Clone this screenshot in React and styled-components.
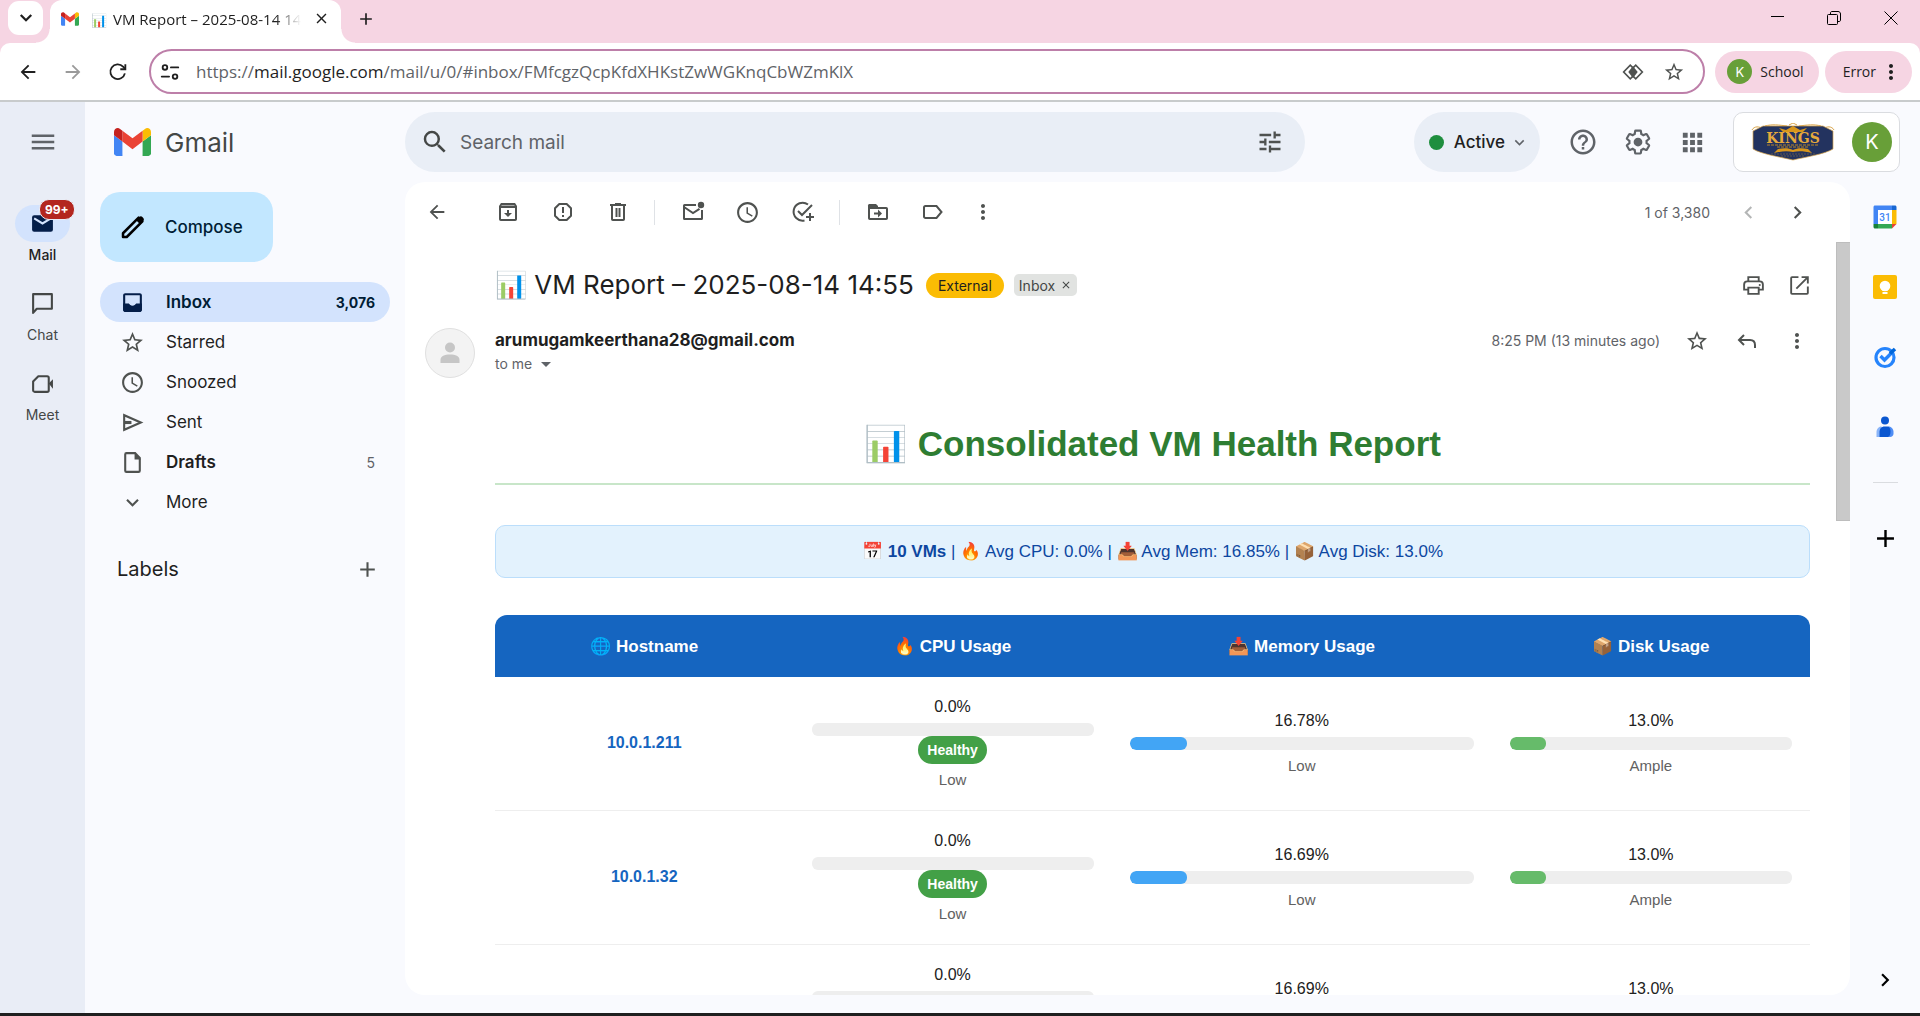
import React from "react";
import styled, { createGlobalStyle } from "styled-components";
import {
  MdAdd, MdApps, MdArrowBack, MdArrowForward, MdChevronLeft, MdChevronRight, MdClose, MdExpandMore,
  MdHelpOutline, MdMenu, MdMoreVert, MdSchedule, MdSearch, MdStarBorder, MdTune, MdArrowDropDown,
} from "react-icons/md";

const ui = `Inter, "Open Sans", sans-serif`;
const chrome = `"Open Sans", "Noto Sans", sans-serif`;
const arial = `"Liberation Sans", Arial, sans-serif`;

const GlobalStyle = createGlobalStyle`
  *, *::before, *::after { box-sizing: border-box; }
  body { margin: 0; background: #f9fafe; font-family: ${ui}; color: #1f1f1f; }
  button, input { font: inherit; color: inherit; }
  button { border: 0; padding: 0; background: none; cursor: pointer; }
  a { color: inherit; text-decoration: none; }
  svg { display: block; flex: none; }
`;

/* ---------- shared parts ---------- */
const Page = styled.div`
  display: flex;
  flex-direction: column;
  height: 100vh;
  border-bottom: 3px solid #1f1f1f;
  overflow: hidden;
`;
const Grow = styled.div`flex: 1;`;
const IconButton = styled.button`
  display: grid;
  place-items: center;
  flex: none;
  width: ${(p) => p.$w || 55}px;
  height: ${(p) => p.$h || 40}px;
  color: ${(p) => p.$color || "#4f5250"};
`;
const Avatar = styled.span`
  display: grid;
  place-items: center;
  flex: none;
  width: ${(p) => p.$size}px;
  height: ${(p) => p.$size}px;
  border-radius: 50%;
  background: #689f38;
  color: #fff;
  font-family: ${ui};
  font-size: ${(p) => p.$font}px;
`;

/* ---------- browser chrome ---------- */
const TabStrip = styled.div`
  display: flex;
  flex: none;
  height: 43px;
  padding-left: 8px;
  background: #f6d5e3;
`;
const TabMenu = styled.button`
  display: grid;
  place-items: center;
  width: 35px;
  height: 34px;
  margin: 1px 7px 0 0;
  border-radius: 11px;
  background: #fff;
`;
const Tab = styled.div`
  position: relative;
  display: flex;
  align-items: center;
  width: 291px;
  padding: 0 10px 6px 11px;
  border-radius: 12px 12px 0 0;
  background: #fff;
  font-family: ${chrome};
  font-size: 15px;
  &::before, &::after {
    content: "";
    position: absolute;
    bottom: 0;
    width: 14px;
    height: 14px;
  }
  &::before { left: -14px; background: radial-gradient(circle at 0 0, transparent 13px, #fff 14px); }
  &::after { right: -14px; background: radial-gradient(circle at 100% 0, transparent 13px, #fff 14px); }
`;
const TabTitle = styled.span`
  flex: 1;
  margin: 0 10px 0 12px;
  overflow: hidden;
  white-space: nowrap;
  mask-image: linear-gradient(to right, #000 88%, transparent);
`;
const TabEmoji = styled.span`font-size: 13px; margin-right: 6px;`;
const NewTab = styled(IconButton)`margin-left: 5px;`;
const ToolbarWrap = styled.div`flex: none; background: #f6d5e3;`;
const Toolbar = styled.div`
  display: flex;
  align-items: center;
  height: 59px;
  padding: 0 8px 0 5px;
  border-bottom: 2px solid #c8cbcc;
  border-radius: 10px 10px 0 0;
  background: #fff;
  font-family: ${chrome};
`;
const Omnibox = styled.div`
  display: flex;
  align-items: center;
  flex: 1;
  min-width: 0;
  height: 45px;
  margin: 0 10px 0 8px;
  padding: 0 8px;
  border: 2px solid #bd7fa9;
  border-radius: 23px;
`;
const Url = styled.div`
  flex: 1;
  min-width: 0;
  margin-left: 15px;
  overflow: hidden;
  white-space: nowrap;
  font-size: 17px;
  line-height: 24px;
  color: #5f6368;
  b { color: #1f1f1f; font-weight: 400; }
`;
const Pill = styled.button`
  display: flex;
  align-items: center;
  gap: ${(p) => p.$gap}px;
  height: 42px;
  padding: ${(p) => p.$pad};
  margin-right: ${(p) => p.$after || 0}px;
  border-radius: 21px;
  background: #f6d5e3;
  font-size: 14px;
`;

/* ---------- application frame ---------- */
const Frame = styled.div`display: flex; flex: 1; min-height: 0;`;
const Rail = styled.nav`
  display: flex;
  flex-direction: column;
  align-items: center;
  flex: none;
  width: 85px;
  background: #e9edf6;
`;
const RailMenu = styled(IconButton)`margin-bottom: 23px;`;
const RailItem = styled.a`
  display: flex;
  flex-direction: column;
  align-items: center;
  gap: 3px;
  height: 80px;
  font-size: 14px;
  line-height: 20px;
  font-weight: ${(p) => (p.$active ? 500 : 400)};
  color: ${(p) => (p.$active ? "#1f1f1f" : "#444746")};
`;
const RailIcon = styled.span`
  position: relative;
  display: grid;
  place-items: center;
  width: 55px;
  height: 37px;
  border-radius: 19px;
  background: ${(p) => (p.$active ? "#d3e3fd" : "transparent")};
`;
const RailBadge = styled.span`
  position: absolute;
  top: -6px;
  left: 24px;
  padding: 0 5px;
  border: 1px solid #e9edf6;
  border-radius: 10px;
  background: #b3261e;
  color: #fff;
  font-size: 12px;
  line-height: 19px;
  font-weight: 700;
`;
const Main = styled.div`display: flex; flex-direction: column; flex: 1; min-width: 0;`;
const Header = styled.header`
  display: flex;
  align-items: center;
  flex: none;
  height: 80px;
  padding-right: 20px;
`;
const Brand = styled.a`
  display: flex;
  align-items: center;
  gap: 14px;
  flex: none;
  width: 320px;
  padding-left: 29px;
  font-size: 26px;
  color: #444746;
`;
const Search = styled.label`
  display: flex;
  align-items: center;
  flex: 0 1 900px;
  height: 60px;
  padding: 0 8px 0 15px;
  border-radius: 30px;
  background: #e9eef6;
  color: #444746;
  input {
    flex: 1;
    min-width: 0;
    margin-left: 8px;
    border: 0;
    outline: 0;
    background: none;
    font-size: 19px;
  }
  input::placeholder { color: #5f6368; opacity: 1; }
`;
const Status = styled.button`
  display: flex;
  align-items: center;
  gap: 5px;
  height: 60px;
  margin-right: 15px;
  padding: 0 11px 0 15px;
  border-radius: 30px;
  background: #e9eef6;
  font-size: 17px;
  font-weight: 500;
`;
const Dot = styled.span`width: 15px; height: 15px; margin-right: 5px; border-radius: 50%; background: #1e8e3e;`;
const Account = styled.button`
  display: flex;
  align-items: center;
  gap: 17px;
  height: 60px;
  margin-left: 13px;
  padding: 0 7px 0 17px;
  border: 1px solid #dadce0;
  border-radius: 10px;
  background: #fff;
`;
const Columns = styled.div`display: flex; flex: 1; min-height: 0; padding-bottom: 18px;`;

/* ---------- left sidebar ---------- */
const Sidebar = styled.aside`flex: none; width: 320px; padding: 10px 15px 0;`;
const Compose = styled.button`
  display: flex;
  align-items: center;
  gap: 17px;
  width: 173px;
  height: 70px;
  margin-bottom: 20px;
  padding-left: 18px;
  border-radius: 20px;
  background: #c2e7ff;
  color: #001d35;
  font-size: 17px;
  font-weight: 500;
`;
const NavItem = styled.a`
  display: flex;
  align-items: center;
  gap: 21px;
  height: 40px;
  padding: 0 15px 0 20px;
  border-radius: 20px;
  background: ${(p) => (p.$active ? "#d3e3fd" : "transparent")};
  color: ${(p) => (p.$active ? "#001d35" : "#1f1f1f")};
  font-size: 17px;
  font-weight: ${(p) => (p.$bold ? 600 : 400)};
  svg { color: ${(p) => (p.$active ? "#041e49" : "#4f5250")}; }
`;
const Count = styled.span`
  margin-left: auto;
  font-size: 14px;
  color: ${(p) => (p.$muted ? "#5f6368" : "inherit")};
  font-weight: ${(p) => (p.$muted ? 400 : 700)};
`;
const LabelsHead = styled.div`
  display: flex;
  align-items: center;
  justify-content: space-between;
  margin: 27px 8px 0 17px;
  font-size: 20px;
`;

/* ---------- message panel ---------- */
const Panel = styled.main`
  display: flex;
  flex-direction: column;
  flex: 1;
  min-width: 0;
  border-radius: 20px;
  background: #fff;
  overflow: hidden;
`;
const Actions = styled.div`
  display: flex;
  align-items: center;
  flex: none;
  height: 60px;
  padding: 0 28px 0 10px;
  font-size: 14px;
  color: #5f6368;
`;
const BackButton = styled(IconButton)`margin-right: 21px;`;
const Divider = styled.span`width: 1px; height: 25px; margin: 0 10px 0 9px; background: #dfe2e6;`;
const PageCount = styled.span`margin-right: 14px;`;
const Scroller = styled.div`display: flex; flex: 1; min-height: 0;`;
const Content = styled.div`
  display: grid;
  grid-template-columns: 50px minmax(0, 1fr);
  column-gap: 20px;
  align-content: start;
  flex: 1;
  min-width: 0;
  padding: 0 26px 0 20px;
  overflow-y: auto;
  scrollbar-width: none;
`;
const Track = styled.div`width: 14px;`;
const Thumb = styled.div`height: 279px; background: #c9c9c9; border: 1px solid #bdbdbd; border-right: 0;`;
const Subject = styled.div`
  grid-column: 2;
  display: flex;
  align-items: center;
  height: 86px;
  margin-right: -12px;
`;
const SubjectText = styled.h2`margin: 0 12px 0 0; font-size: 26px; line-height: 36px; font-weight: 400;`;
const External = styled.span`
  margin-right: 10px;
  padding: 0 12px;
  border-radius: 13px;
  background: #fbbc04;
  font-size: 14px;
  line-height: 25px;
`;
const InboxChip = styled.button`
  display: flex;
  align-items: center;
  gap: 5px;
  height: 22px;
  padding: 0 5px;
  border-radius: 5px;
  background: #e1e3e1;
  color: #444746;
  font-size: 14px;
`;
const Person = styled.span`
  display: grid;
  place-items: center;
  width: 50px;
  height: 50px;
  border: 1px solid #e0e0e0;
  border-radius: 50%;
  background: #f3f3f3;
  color: #c6c6c6;
`;
const Sender = styled.div`display: flex; height: 50px; margin-right: -12px; font-size: 14px; color: #5f6368;`;
const SenderName = styled.div`
  color: #1f1f1f;
  font-size: 17px;
  line-height: 24px;
  font-weight: 700;
`;
const Recipient = styled.button`display: flex; align-items: center; gap: 2px; line-height: 24px;`;
const SenderTools = styled.div`display: flex; align-items: center; height: 25px;`;
const Time = styled.span`margin-right: 12px;`;
const Body = styled.article`grid-column: 2; padding-top: 45px; font-family: ${arial};`;
const ReportTitle = styled.h1`
  margin: 0 0 40px;
  padding-bottom: 18px;
  border-bottom: 2px solid #c8e6c9;
  color: #2e7d32;
  font-size: 35px;
  line-height: 42px;
  text-align: center;
`;
const Summary = styled.p`
  margin: 0 0 37px;
  padding: 13px;
  border: 1px solid #bbdefb;
  border-radius: 10px;
  background: #e3f2fd;
  color: #0d47a1;
  font-size: 17px;
  line-height: 25px;
  text-align: center;
`;
const Table = styled.table`
  width: 100%;
  table-layout: fixed;
  border-spacing: 0;
  border-radius: 12px 12px 0 0;
  overflow: hidden;
  text-align: center;
  color: #212121;
  font-size: 16px;
`;
const Col = styled.col`width: ${(p) => p.$w}%;`;
const Th = styled.th`height: 62px; padding: 0; background: #1565c0; color: #fff; font-size: 17px;`;
const Td = styled.td`padding: 19px 18px 20px; border-bottom: 1px solid #eee;`;
const Host = styled.a`color: #1565c0; font-weight: 700;`;
const Percent = styled.div`line-height: 22px; margin-bottom: 5px;`;
const Meter = styled.div`height: 13px; border-radius: 6px; background: #eee; overflow: hidden;`;
const Fill = styled.div`height: 100%; border-radius: 6px; background: ${(p) => p.$color};`;
const Badge = styled.span`
  display: block;
  width: fit-content;
  margin: 0 auto;
  padding: 0 9px;
  border-radius: 14px;
  background: #43a047;
  color: #fff;
  font-size: 14px;
  line-height: 28px;
  font-weight: 700;
`;
const Level = styled.div`margin-top: 5px; line-height: 21px; font-size: 15px; color: #616161;`;

/* ---------- right add-on rail ---------- */
const Addons = styled.aside`
  display: flex;
  flex-direction: column;
  align-items: center;
  flex: none;
  width: 70px;
`;
const Rule = styled.span`width: 25px; height: 1px; margin: 20px 0; background: #dadce0;`;

/* ---------- drawings ---------- */
const Stroke = ({ size = 24, w = 2, children }) => (
  <svg width={size} height={size} viewBox="0 0 24 24" fill="none" stroke="currentColor" strokeWidth={w}>{children}</svg>
);
const GmailMark = ({ width, height }) => (
  <svg width={width} height={height} viewBox="52 42 88 66">
    <path fill="#4285f4" d="M58 108h14V74L52 59v43c0 3.32 2.69 6 6 6" />
    <path fill="#34a853" d="M120 108h14c3.32 0 6-2.69 6-6V59l-20 15" />
    <path fill="#fbbc04" d="M120 48v26l20-15v-8c0-7.42-8.47-11.65-14.4-7.2" />
    <path fill="#ea4335" d="M72 74V48l24 18 24-18v26L96 92" />
    <path fill="#c5221f" d="M52 51v8l20 15V48l-5.6-4.2c-5.94-4.45-14.4-.22-14.4 7.2" />
  </svg>
);
const ArchiveIcon = () => (
  <Stroke><path d="M4 7v12.2c0 .5.3.8.8.8h14.4c.5 0 .8-.3.8-.8V7" /><path d="M5 3h14l2 3v2H3V6z" fill="currentColor" stroke="none" /><path d="M5.5 5.5h13" stroke="#aaa" strokeWidth="1" /><path d="M12 10v4" /><path d="M8 13h8l-4 4z" fill="currentColor" stroke="none" /></Stroke>
);
const SpamIcon = () => (
  <Stroke><path d="M8.3 4h7.4L20 8.3v7.4L15.7 20H8.3L4 15.700V8.300z" strokeLinejoin="round" /><path d="M12 7v6M12 15v2" /></Stroke>
);
const TrashIcon = () => (
  <Stroke><path d="M4 5h16M9 4h6" /><path d="M6 6v13.200c0 .5.3.8.8.8h10.400c.5 0 .8-.3.8-.8V6" /><path d="M10.500 8v9M13.500 8v9" /></Stroke>
);
const UnreadIcon = () => (
  <Stroke><path d="M15 5H3.500c-.3 0-.5.2-.5.5v13c0 .3.2.5.5.5h17c.3 0 .5-.2.5-.5V10" /><path d="M3 7l9 6 6.500-4.200" /><circle cx="20" cy="5" r="3.200" fill="currentColor" stroke="none" /></Stroke>
);
const TaskIcon = () => (
  <Stroke><path d="M17 4.500A9 9 0 1 0 13.500 20.500" /><path d="M7 11l4 4L21 5" /><path d="M19 13v8M15 17h8" /></Stroke>
);
const MoveIcon = () => (
  <Stroke><path d="M3 7v11.200c0 .5.3.8.8.8h16.400c.5 0 .8-.3.8-.8V8.800c0-.5-.3-.8-.8-.8H3" /><path d="M2 8V5.500C2 4.700 2.700 4 3.500 4H10l2 2v2z" fill="currentColor" stroke="none" /><path d="M8 13.500h5" /><path d="M12 9.500v8l4-4z" fill="currentColor" stroke="none" /></Stroke>
);
const LabelIcon = () => (
  <Stroke><path d="M4.500 6h11L20.500 12l-5 6h-11c-.8 0-1.500-.7-1.500-1.500v-9C3 6.700 3.700 6 4.500 6z" /></Stroke>
);
const PrintIcon = () => (
  <Stroke size={25} w={1.800}><path d="M7 8V4h10v4M7 16H3v-5c0-1.700 1.300-3 3-3h12c1.700 0 3 1.300 3 3v5h-4M7 14h10v6H7z" /><circle cx="18" cy="11.500" r="1" fill="currentColor" stroke="none" /></Stroke>
);
const OpenIcon = () => (
  <Stroke size={25} w={1.800}><path d="M11 4H4.800c-.5 0-.8.3-.8.8v14.400c0 .5.3.8.8.8h14.400c.5 0 .8-.3.8-.8V13M14 4h6v6M20 4L9 15" /></Stroke>
);
const ReplyIcon = () => <Stroke><path d="M9 6L4 11l5 5M4 11h11c3 0 5 2 5 5v3" /></Stroke>;
const InboxIcon = () => (
  <svg width="25" height="25" viewBox="0 0 24 24"><path fill="currentColor" fillRule="evenodd" d="M5 3h14c1.100 0 2 .9 2 2v14c0 1.100-.9 2-2 2H5c-1.100 0-2-.9-2-2V5c0-1.100.9-2 2-2zm0 2v9h4c.6 1.200 1.700 2 3 2s2.400-.8 3-2h4V5z" clipRule="evenodd" /><path fill="currentColor" d="M3 13h5.500c.5 1.200 1.900 2 3.500 2s3-.8 3.500-2H21v6c0 1.100-.9 2-2 2H5c-1.100 0-2-.9-2-2z" /></svg>
);
const GearIcon = () => (
  <svg width="30" height="30" viewBox="0 0 24 24" fill="none">
    <path stroke="currentColor" strokeWidth="1.900" transform="translate(1 1) scale(.917)" d="M19.430 12.980c.04-.32.07-.64.07-.98 0-.34-.03-.66-.07-.98l2.110-1.650c.19-.15.24-.42.12-.64l-2-3.460c-.09-.16-.26-.25-.44-.25-.06 0-.12.01-.17.03l-2.490 1c-.52-.4-1.080-.73-1.690-.98l-.38-2.650C14.460 2.180 14.250 2 14 2h-4c-.25 0-.46.18-.49.42l-.38 2.650c-.61.25-1.170.59-1.690.98l-2.490-1c-.06-.02-.12-.03-.18-.03-.17 0-.34.09-.43.25l-2 3.460c-.13.22-.07.49.12.64l2.110 1.650c-.04.32-.07.65-.07.98 0 .33.03.66.07.98l-2.110 1.650c-.19.15-.24.42-.12.64l2 3.460c.09.16.26.25.44.25.06 0 .12-.01.17-.03l2.490-1c.52.4 1.080.73 1.690.98l.38 2.650c.03.24.24.42.49.42h4c.25 0 .46-.18.49-.42l.38-2.650c.61-.25 1.170-.59 1.690-.98l2.490 1c.06.02.12.03.18.03.17 0 .34-.09.43-.25l2-3.460c.12-.22.07-.49-.12-.64l-2.110-1.650z" />
    <circle cx="12" cy="12" r="3.500" fill="currentColor" />
  </svg>
);
const MailIcon = () => (
  <svg width="25" height="25" viewBox="0 0 24 24"><rect x="2" y="4" width="20" height="16" rx="2" fill="#041e49" /><path d="M4 7l8 5 8-5" fill="none" stroke="#d3e3fd" strokeWidth="2" /></svg>
);
const ChatIcon = () => <Stroke size={25}><path d="M3 21V3h18v14H6.500z" strokeLinejoin="round" /></Stroke>;
const MeetIcon = () => (
  <Stroke size={25}><path d="M8 5h8.500c.8 0 1.500.7 1.500 1.500v12c0 .8-.7 1.500-1.500 1.500h-12c-.8 0-1.500-.7-1.500-1.500V10z" strokeLinejoin="round" /><path d="M18 12l4-4v9z" fill="currentColor" stroke="none" /></Stroke>
);
const SentIcon = () => (
  <Stroke size={25}><path d="M4 5v14l16-7z" /><path d="M4 12h7" strokeWidth="3" /></Stroke>
);
const DraftIcon = () => (
  <Stroke size={25}><path d="M14.500 3H6.200c-.7 0-1.200.5-1.200 1.200v15.600c0 .7.5 1.200 1.200 1.200h11.600c.7 0 1.200-.5 1.200-1.200V7.500z" /><path d="M14 2v7h6z" fill="currentColor" stroke="none" /></Stroke>
);
const PencilIcon = () => (
  <svg width="30" height="30" viewBox="0 0 24 24"><path fill="none" stroke="#000" strokeWidth="2" strokeLinejoin="round" d="M4 20v-3L16.500 4.500l3 3L7 20z" /><path d="M14.500 6.500L17 4c.8-.8 1.800-.8 2.500 0l.7.700c.7.700.7 1.700 0 2.500l-2.500 2.500z" /></svg>
);
const SiteIcon = () => (
  <Stroke size={22}><circle cx="6.500" cy="7" r="2.500" /><path d="M13 7h8M3 17h8" strokeLinecap="round" /><circle cx="17.500" cy="17" r="2.500" /></Stroke>
);
const LensIcon = () => (
  <Stroke size={22} w={1.800}><path d="M12 7.500L9 4.500 1.800 12 9 19.500l3-3M12 7.500l3-3 7.200 7.500-7.200 7.500-3-3" /><path d="M12 7l4 5-4 5-4-5z" fill="currentColor" /></Stroke>
);
const ReloadIcon = () => (
  <Stroke size={22}><path d="M19.500 13.500A8 8 0 1 1 17.500 6.200L20 8.800" /><path d="M20 3.500V9h-5.500" /></Stroke>
);
const KingsLogo = () => (
  <svg width="84" height="38" viewBox="0 0 84 38" role="img" aria-label="Kings crest">
    <path d="M1 7c2-4 8-4 10-1M83 7c-2-4-8-4-10-1M14 3c7-2 14-1 22 0M70 3c-7-2-14-1-22 0M38 2l4-2 4 2" fill="none" stroke="#d9a54a" strokeWidth="1" />
    <path d="M12 3h60l10 5v18c-8 5-27 8-40 11C29 34 10 31 2 26V8z" fill="#23335f" stroke="#d9a54a" strokeWidth=".7" />
    <path d="M32 9l-4-4 7 2 7-4 7 4 7-2-4 4z" fill="#d8961c" />
    <text x="42" y="20" textAnchor="middle" fontFamily="DejaVu Serif, serif" fontWeight="700" fontSize="14" fill="#e6aa3c">KINGS</text>
    <path d="M16 22h52M26 24h32" stroke="#b98528" strokeWidth="1" strokeDasharray="3 1" />
    <path d="M23 30l4-4c6-1 11-1 15 1 4-2 9-2 15-1l4 4c-8-2-14-2-19-1-5-1-11-1-19 1z" fill="#d8961c" />
    <path d="M20 31h44M30 33h24" stroke="#8d7442" strokeWidth=".6" strokeDasharray="2 1" />
  </svg>
);
const CalendarIcon = () => (
  <svg width="24" height="24" viewBox="0 0 24 24">
    <path fill="#fff" d="M4 4h15v15H4z" /><path fill="#4285f4" d="M2 .5h17v4.500H5v14H.5V2C.5 1.200 1.200.5 2 .5z" /><path fill="#1967d2" d="M19 .5h3c.8 0 1.500.7 1.500 1.500v3H19z" />
    <path fill="#fbbc04" d="M19 5h4.500v14H19z" /><path fill="#34a853" d="M5 19h14v4.500H5z" /><path fill="#188038" d="M.5 19H5v4.500H2c-.8 0-1.500-.7-1.500-1.500z" /><path fill="#ea4335" d="M19 19h4.500L19 23.500z" />
    <text x="12" y="16" textAnchor="middle" fontFamily="Roboto, sans-serif" fontSize="10" fontWeight="500" fill="#4285f4">31</text>
  </svg>
);
const KeepIcon = () => (
  <svg width="24" height="24" viewBox="0 0 24 24"><rect width="24" height="24" rx="2" fill="#fbbc04" /><circle cx="12" cy="11" r="5.300" fill="#fff" /><path fill="#fff" d="M9.500 14h5v2h-5zM9.500 17h5v2h-5z" /></svg>
);
const TasksIcon = () => (
  <svg width="24" height="24" viewBox="0 0 24 24" fill="none"><circle cx="12" cy="12.500" r="9" stroke="#2684fc" strokeWidth="3.200" /><path stroke="#2684fc" strokeWidth="3.400" d="M7.500 11l4 4L19 7.500" /><path stroke="#0066da" strokeWidth="3.600" d="M17 8.500l5-4.500" /></svg>
);
const ContactsIcon = () => (
  <svg width="24" height="24" viewBox="0 0 24 24"><circle cx="12" cy="5.500" r="4" fill="#0b57d0" /><path fill="#8ab4f8" d="M3.500 22v-5c0-3 2-5.500 5-5.500V22z" /><path fill="#4f8df5" d="M15 11.500c3 0 5.500 2 5.500 5.500v1.500c0 2-1.500 3.500-3.500 3.500h-2z" /><path fill="#0b57d0" d="M6.500 22v-4.500c0-4 2-6 5-6h2c3 0 4 2 4 5S16.500 22 14 22z" /></svg>
);
const PersonIcon = () => (
  <svg width="20" height="22" viewBox="0 0 20 22" fill="currentColor"><circle cx="10" cy="5.500" r="5" /><path d="M.5 21v-3c0-4 4-5.500 9.500-5.500s9.500 1.500 9.500 5.500v3z" /></svg>
);

/* ---------- data ---------- */
const folders = [
  { name: "Inbox", icon: <InboxIcon />, count: "3,076", active: true, bold: true },
  { name: "Starred", icon: <MdStarBorder size={25} /> },
  { name: "Snoozed", icon: <MdSchedule size={25} /> },
  { name: "Sent", icon: <SentIcon /> },
  { name: "Drafts", icon: <DraftIcon />, count: "5", bold: true },
  { name: "More", icon: <MdExpandMore size={25} /> },
];
const rows = [
  { host: "10.0.1.211", cpu: "0.0", mem: "16.78", disk: "13.0" },
  { host: "10.0.1.32", cpu: "0.0", mem: "16.69", disk: "13.0" },
  { host: "", cpu: "0.0", mem: "16.69", disk: "13.0" },
];
const headings = ["🌐 Hostname", "🔥 CPU Usage", "📥 Memory Usage", "📦 Disk Usage"];

function Usage({ value, color, badge, level }) {
  return (
    <Td>
      <Percent>{value}%</Percent>
      <Meter><Fill $color={color} style={{ width: `${value}%` }} /></Meter>
      {badge && <Badge>{badge}</Badge>}
      <Level>{level}</Level>
    </Td>
  );
}

function Browser() {
  return (
    <>
      <TabStrip>
        <TabMenu aria-label="Search tabs"><Stroke size={18} w={3}><path d="M5 8l7 7 7-7" /></Stroke></TabMenu>
        <Tab>
          <GmailMark width={18} height={14} />
          <TabTitle><TabEmoji>📊</TabEmoji>VM Report – 2025-08-14 14:55</TabTitle>
          <IconButton $w={20} $h={24} $color="#1f1f1f" aria-label="Close tab"><MdClose size={17} /></IconButton>
        </Tab>
        <NewTab $w={40} $h={37} $color="#1f1f1f" aria-label="New tab"><MdAdd size={20} /></NewTab>
        <Grow />
        <IconButton $w={56} $h={35} $color="#000" aria-label="Minimize"><svg width="13" height="13" stroke="currentColor"><path d="M0 5.500h13" /></svg></IconButton>
        <IconButton $w={57} $h={35} $color="#000" aria-label="Restore"><svg width="14" height="14" fill="none" stroke="currentColor"><rect x=".5" y="3.500" width="10" height="10" rx="1" /><path d="M3.500 3V2c0-1 .5-1.500 1.500-1.500h6c1.500 0 2.500 1 2.500 2.500v6c0 1-.5 1.500-1.500 1.500h-1" /></svg></IconButton>
        <IconButton $w={58} $h={35} $color="#000" aria-label="Close"><svg width="14" height="14" stroke="currentColor"><path d="M.5.5l13 13M13.500.5l-13 13" /></svg></IconButton>
      </TabStrip>
      <ToolbarWrap>
        <Toolbar>
          <IconButton $w={45} $color="#1f1f1f" aria-label="Back"><MdArrowBack size={22} /></IconButton>
          <IconButton $w={45} $color="#9a9a9a" aria-label="Forward"><MdArrowForward size={22} /></IconButton>
          <IconButton $w={46} $color="#1f1f1f" aria-label="Reload"><ReloadIcon /></IconButton>
          <Omnibox>
            <SiteIcon />
            <Url role="textbox" tabIndex={0} aria-label="Address">https://<b>mail.google.com</b>/mail/u/0/#inbox/FMfcgzQcpKfdXHKstZwWGKnqCbWZmKlX</Url>
            <IconButton $w={40} aria-label="Reader"><LensIcon /></IconButton>
            <IconButton $w={42} aria-label="Bookmark"><MdStarBorder size={22} /></IconButton>
          </Omnibox>
          <Pill $pad="0 15px 0 12px" $gap={8} $after={6}><Avatar $size={25} $font={13}>K</Avatar>School</Pill>
          <Pill $pad="0 9px 0 18px" $gap={3}>Error<MdMoreVert size={24} /></Pill>
        </Toolbar>
      </ToolbarWrap>
    </>
  );
}

function Message() {
  return (
    <Panel>
      <Actions>
        <BackButton $w={44} aria-label="Back to inbox"><MdArrowBack size={22} /></BackButton>
        <IconButton aria-label="Archive"><ArchiveIcon /></IconButton>
        <IconButton aria-label="Report spam"><SpamIcon /></IconButton>
        <IconButton aria-label="Delete"><TrashIcon /></IconButton>
        <Divider />
        <IconButton aria-label="Mark as unread"><UnreadIcon /></IconButton>
        <IconButton aria-label="Snooze"><MdSchedule size={25} /></IconButton>
        <IconButton aria-label="Add to tasks"><TaskIcon /></IconButton>
        <Divider />
        <IconButton aria-label="Move to"><MoveIcon /></IconButton>
        <IconButton aria-label="Labels"><LabelIcon /></IconButton>
        <IconButton $w={45} aria-label="More"><MdMoreVert size={24} /></IconButton>
        <Grow />
        <PageCount>1 of 3,380</PageCount>
        <IconButton $w={49} $color="#b4b6b6" aria-label="Newer"><MdChevronLeft size={25} /></IconButton>
        <IconButton $w={49} aria-label="Older"><MdChevronRight size={25} /></IconButton>
      </Actions>
      <Scroller>
        <Content>
          <Subject>
            <SubjectText>📊 VM Report – 2025-08-14 14:55</SubjectText>
            <External>External</External>
            <InboxChip>Inbox <MdClose size={12} /></InboxChip>
            <Grow />
            <IconButton $w={46} aria-label="Print all"><PrintIcon /></IconButton>
            <IconButton $w={46} aria-label="Open in new window"><OpenIcon /></IconButton>
          </Subject>
          <Person><PersonIcon /></Person>
          <Sender>
            <div>
              <SenderName>arumugamkeerthana28@gmail.com</SenderName>
              <Recipient>to me <MdArrowDropDown size={24} /></Recipient>
            </div>
            <Grow />
            <SenderTools>
              <Time>8:25 PM (13 minutes ago)</Time>
              <IconButton $w={50} aria-label="Star"><MdStarBorder size={24} /></IconButton>
              <IconButton $w={50} aria-label="Reply"><ReplyIcon /></IconButton>
              <IconButton $w={50} aria-label="More"><MdMoreVert size={24} /></IconButton>
            </SenderTools>
          </Sender>
          <Body>
            <ReportTitle>📊 Consolidated VM Health Report</ReportTitle>
            <Summary>📅 <strong>10 VMs</strong> | 🔥 Avg CPU: 0.0% | 📥 Avg Mem: 16.85% | 📦 Avg Disk: 13.0%</Summary>
            <Table>
              <colgroup><Col $w={22.7} /><Col $w={24.2} /><Col $w={28.9} /><Col $w={24.2} /></colgroup>
              <thead><tr>{headings.map((h) => <Th key={h} scope="col">{h}</Th>)}</tr></thead>
              <tbody>
                {rows.map((r, i) => (
                  <tr key={i}>
                    <Td><Host href="#host">{r.host}</Host></Td>
                    <Usage value={r.cpu} color="#42a5f5" badge="Healthy" level="Low" />
                    <Usage value={r.mem} color="#42a5f5" level="Low" />
                    <Usage value={r.disk} color="#66bb6a" level="Ample" />
                  </tr>
                ))}
              </tbody>
            </Table>
          </Body>
        </Content>
        <Track><Thumb /></Track>
      </Scroller>
    </Panel>
  );
}

export default function App() {
  return (
    <Page>
      <GlobalStyle />
      <Browser />
      <Frame>
        <Rail>
          <RailMenu $h={80} $color="#5f6368" aria-label="Main menu"><MdMenu size={30} /></RailMenu>
          <RailItem $active href="#mail"><RailIcon $active><MailIcon /><RailBadge>99+</RailBadge></RailIcon>Mail</RailItem>
          <RailItem href="#chat"><RailIcon><ChatIcon /></RailIcon>Chat</RailItem>
          <RailItem href="#meet"><RailIcon><MeetIcon /></RailIcon>Meet</RailItem>
        </Rail>
        <Main>
          <Header>
            <Brand href="#inbox"><GmailMark width={37} height={28} />Gmail</Brand>
            <Search>
              <MdSearch size={30} />
              <input type="search" placeholder="Search mail" aria-label="Search mail" />
              <IconButton aria-label="Search options"><MdTune size={28} /></IconButton>
            </Search>
            <Grow />
            <Status><Dot />Active<MdExpandMore size={19} color="#5f6368" /></Status>
            <IconButton $color="#5f6368" aria-label="Support"><MdHelpOutline size={30} /></IconButton>
            <IconButton $color="#5f6368" aria-label="Settings"><GearIcon /></IconButton>
            <IconButton $color="#5f6368" aria-label="Google apps"><MdApps size={29} /></IconButton>
            <Account aria-label="Account"><KingsLogo /><Avatar $size={40} $font={20}>K</Avatar></Account>
          </Header>
          <Columns>
            <Sidebar>
              <Compose><PencilIcon />Compose</Compose>
              {folders.map((f) => (
                <NavItem key={f.name} href={`#${f.name.toLowerCase()}`} $active={f.active} $bold={f.bold}>
                  {f.icon}{f.name}{f.count && <Count $muted={!f.active}>{f.count}</Count>}
                </NavItem>
              ))}
              <LabelsHead>Labels<IconButton $w={30} aria-label="Create label"><MdAdd size={25} /></IconButton></LabelsHead>
            </Sidebar>
            <Message />
            <Addons>
              <IconButton $h={70} aria-label="Calendar"><CalendarIcon /></IconButton>
              <IconButton $h={70} aria-label="Keep"><KeepIcon /></IconButton>
              <IconButton $h={70} aria-label="Tasks"><TasksIcon /></IconButton>
              <IconButton $h={70} aria-label="Contacts"><ContactsIcon /></IconButton>
              <Rule />
              <IconButton $h={70} $color="#000" aria-label="Get add-ons"><MdAdd size={29} /></IconButton>
              <Grow />
              <IconButton $h={30} $color="#000" aria-label="Hide side panel"><MdChevronRight size={26} /></IconButton>
            </Addons>
          </Columns>
        </Main>
      </Frame>
    </Page>
  );
}
